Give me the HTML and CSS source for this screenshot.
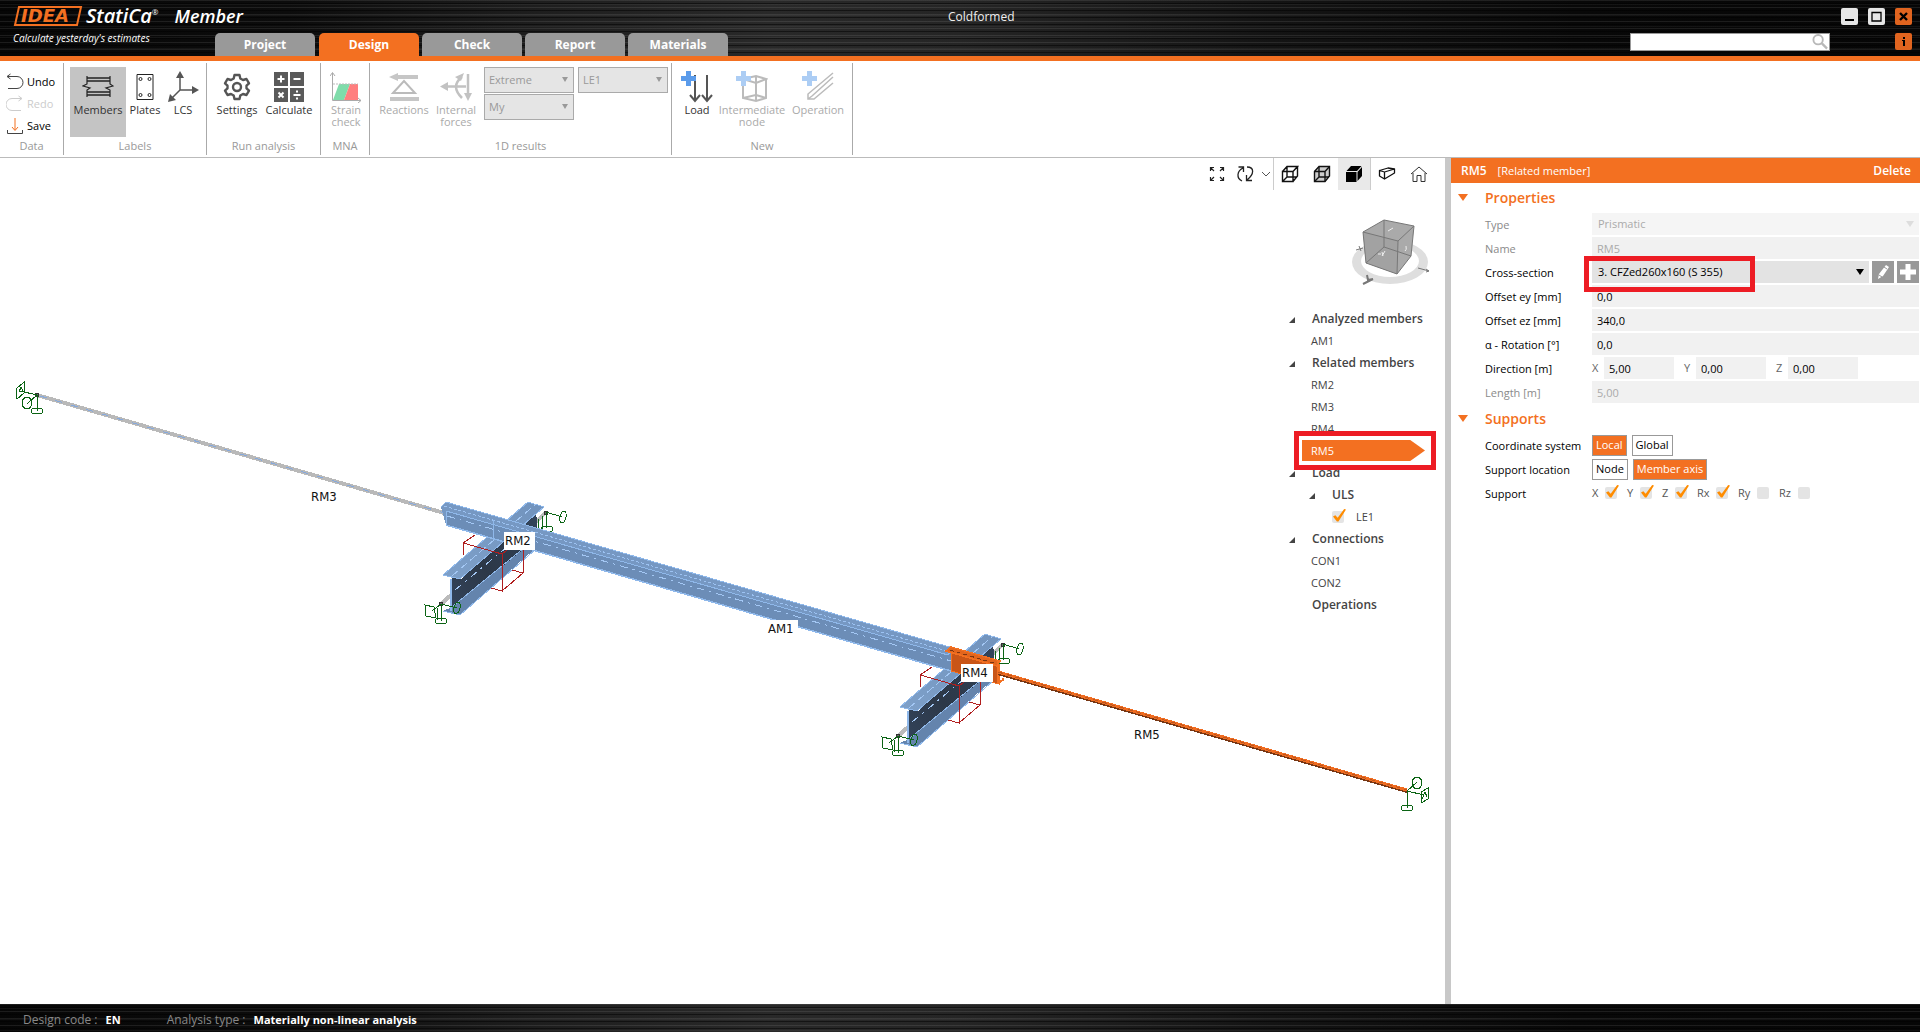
FILE: index.html
```html
<!DOCTYPE html>
<html lang="en">
<head>
<meta charset="utf-8">
<title>Coldformed - IDEA StatiCa Member</title>
<link rel="stylesheet" href="styles.css">
</head>
<body>
<header class="header">
  <div class="brand">
    <div class="brand-row">
      <svg class="logo" width="70" height="20" viewBox="0 0 70 20" role="img" aria-label="IDEA">
        <path d="M6 1H68L64 19H2Z" fill="none" stroke="#f37021" stroke-width="2"/>
        <text class="logo-text" x="8" y="16">IDEA</text>
      </svg>
      <span class="brand-name">StatiCa<sup class="reg">®</sup></span>
      <span class="product">Member</span>
    </div>
    <div class="tagline">Calculate yesterday's estimates</div>
  </div>
  <nav class="tabs">
    <button class="tab">Project</button>
    <button class="tab active">Design</button>
    <button class="tab">Check</button>
    <button class="tab">Report</button>
    <button class="tab">Materials</button>
  </nav>
  <div class="doc-title">Coldformed</div>
  <div class="header-right">
    <div class="win-buttons">
      <button class="win" aria-label="Minimize"><svg width="17" height="17"><path d="M4 12H13" stroke="#000" stroke-width="2"/></svg></button>
      <button class="win" aria-label="Maximize"><svg width="17" height="17"><path d="M4 4.5H13V13H4Z" fill="none" stroke="#000" stroke-width="1.3"/></svg></button>
      <button class="win orange" aria-label="Close"><svg width="17" height="17"><path d="M5 5L12 12M12 5L5 12" stroke="#000" stroke-width="2.4"/></svg></button>
    </div>
    <div class="search-row">
      <label class="search">
        <input type="search" aria-label="Search">
        <svg width="18" height="16" viewBox="0 0 18 17"><circle cx="7" cy="6" r="5" fill="none" stroke="#b8b8b8" stroke-width="2"/><path d="M11 10L16.500 15.500" stroke="#b8b8b8" stroke-width="2.500"/></svg>
      </label>
      <button class="win orange" aria-label="Info"><svg width="17" height="17"><path d="M8 4H10V6H8ZM7 7H10V13H8V8H7Z" fill="#000"/></svg></button>
    </div>
  </div>
</header>

<section class="ribbon">
  <div class="group g-data">
    <div class="stack">
      <button class="line-btn"><svg width="18" height="18" viewBox="0 0 18 18" fill="none" stroke="#444" stroke-width="1"><path d="M1.500 3.500H11A5.500 5.500 0 0 1 11 15.500H2M4.500 1L1 3.500L4.500 6"/></svg>Undo</button>
      <button class="line-btn off" disabled><svg width="18" height="18" viewBox="0 0 18 18" fill="none" stroke="#ccc" stroke-width="1"><path d="M15.500 3.500H6A5.500 5.500 0 0 0 6 15.500H15M12.500 1L16 3.500L12.500 6"/></svg>Redo</button>
      <button class="line-btn"><svg width="18" height="18" viewBox="0 0 18 18" fill="none"><path d="M1.500 13V16.500H16.500V13" stroke="#444"/><path d="M9 1V13M6 10L9 13.500L12 10" stroke="#f37021"/></svg>Save</button>
    </div>
    <div class="caption">Data</div>
  </div>
  <div class="group g-labels">
    <div class="tools">
      <button class="tool sel w56"><svg width="32" height="28" viewBox="0 0 32 28" fill="none"><path d="M5 5H28M5 8H28M5 19H28M5 22H28" stroke="#222" stroke-width="1.500"/><path d="M5 3V11L1 13L8 15L5 17V24M28 3V11L31 13L24 15L28 17V24" stroke="#222" stroke-width="1.200"/></svg><span>Members</span></button>
      <button class="tool w38"><svg width="20" height="28" viewBox="0 0 20 28" fill="none" stroke="#222"><path d="M2 1.500H18V26.500H2Z"/><circle cx="5.500" cy="6" r="1.500"/><circle cx="14.500" cy="6" r="1.500"/><circle cx="5.500" cy="22" r="1.500"/><circle cx="14.500" cy="22" r="1.500"/></svg><span>Plates</span></button>
      <button class="tool w38"><svg width="32" height="32" viewBox="0 0 32 32"><path d="M13 5V19H27M13 19L4 28" fill="none" stroke="#555" stroke-width="1.500"/><path d="M9 7L13 0L17 7ZM25 15L32 19L25 23ZM1 31L3 23L9 29Z" fill="#555"/></svg><span>LCS</span></button>
    </div>
    <div class="caption">Labels</div>
  </div>
  <div class="group g-run">
    <div class="tools">
      <button class="tool w48"><svg width="28" height="28" viewBox="0 0 28 28" fill="none" stroke="#555" stroke-width="2.400" stroke-linejoin="round"><path d="M11.500 2H16.500L17.300 5.500L20 7L23.500 6L26 10.300L23.500 12.700V15.300L26 17.700L23.500 22L20 21L17.300 22.500L16.500 26H11.500L10.700 22.500L8 21L4.500 22L2 17.700L4.500 15.300V12.700L2 10.300L4.500 6L8 7L10.700 5.500Z"/><circle cx="14" cy="14" r="4"/></svg><span>Settings</span></button>
      <button class="tool w56"><svg width="30" height="30" viewBox="0 0 30 30"><path d="M0 0H14V14H0ZM16 0H30V14H16ZM0 16H14V30H0ZM16 16H30V30H16Z" fill="#5a5a5a"/><path d="M7 3.500V10.500M3.500 7H10.500M19.500 7H26.500M4.500 20.500L9.500 25.500M9.500 20.500L4.500 25.500M19.500 23H26.500M23 18.500V20.500M23 25.500V27.500" stroke="#fff" stroke-width="2"/></svg><span>Calculate</span></button>
    </div>
    <div class="caption">Run analysis</div>
  </div>
  <div class="group g-mna">
    <div class="tools">
      <button class="tool off w44" disabled><svg width="32" height="32" viewBox="0 0 32 32"><path d="M3 29L9 13H20L14 29Z" fill="#7fdcaa"/><path d="M14 29L20 13H28V29Z" fill="#ff7f7f"/><path d="M2.500 2V29.500H31M0 5L2.500 1.500L5 5M28 27L31 29.500L28 32" fill="none" stroke="#aaa"/><path d="M3 13H28" stroke="#bbb" stroke-dasharray="2 1"/></svg><span>Strain<br>check</span></button>
    </div>
    <div class="caption">MNA</div>
  </div>
  <div class="group g-results">
    <div class="tools">
      <button class="tool off w56" disabled><svg width="30" height="30" viewBox="0 0 30 30"><path d="M0 5L9 1V3H29V7H9V9Z" fill="#c6c6c6"/><path d="M4 21L15 9L26 21Z" fill="none" stroke="#bbb" stroke-width="2"/><path d="M1 25H30V29H1Z" fill="#c6c6c6"/></svg><span>Reactions</span></button>
      <button class="tool off w48" disabled><svg width="32" height="30" viewBox="0 0 32 30" fill="none" stroke="#c2c2c2" stroke-width="2.500"><path d="M6 14.500H26M28 2V22M22 5Q10 14 22 26"/><path d="M0 14.500L8 10V19ZM24 21H32L28 29ZM15 5L24 1L21 9Z" fill="#c2c2c2" stroke="none"/></svg><span>Internal<br>forces</span></button>
      <div class="combos">
        <span class="combo"><select disabled aria-label="Result position"><option>Extreme</option></select></span>
        <span class="combo"><select disabled aria-label="Internal force"><option>My</option></select></span>
      </div>
      <div class="combos">
        <span class="combo"><select disabled aria-label="Load case"><option>LE1</option></select></span>
      </div>
    </div>
    <div class="caption">1D results</div>
  </div>
  <div class="group g-new">
    <div class="tools">
      <button class="tool w34"><svg width="32" height="32" viewBox="0 0 32 32"><path d="M14 4V29M26 4V29M9 24L14 30L19 24M21 24L26 30L31 24" fill="none" stroke="#555" stroke-width="2"/><path d="M5 0H10V5H15V10H10V15H5V10H0V5H5Z" fill="#5b9bea"/></svg><span>Load</span></button>
      <button class="tool off w76" disabled><svg width="32" height="32" viewBox="0 0 32 32"><path d="M7 8L20 12L30 8L20 5ZM7 8V27L20 30L30 27V8M20 12V30M20 5V24L7 27M20 24L30 27" fill="none" stroke="#bbb" stroke-width="2"/><path d="M5 0H10V5H15V10H10V15H5V10H0V5H5Z" fill="#accdf4"/></svg><span>Intermediate<br>node</span></button>
      <button class="tool off w56" disabled><svg width="32" height="32" viewBox="0 0 32 32"><path d="M31 2L6 23V28H12L31 12M31 6L10 25M6 28L10 25" fill="none" stroke="#bbb" stroke-width="1.500"/><path d="M5 0H10V5H15V10H10V15H5V10H0V5H5Z" fill="#accdf4"/></svg><span>Operation</span></button>
    </div>
    <div class="caption">New</div>
  </div>
</section>

<main class="main">
  <section class="viewport">
    <svg class="scene" viewBox="0 158 1445 845" role="img" aria-label="Member model">
      <defs>
        <linearGradient id="web" x1="0" y1="1" x2="1" y2="0"><stop offset="0" stop-color="#33435a"/><stop offset=".4" stop-color="#2c3848"/><stop offset=".7" stop-color="#2e3d50"/><stop offset="1" stop-color="#34465c"/></linearGradient>
        <linearGradient id="flange" x1="0" y1="1" x2="1" y2="0"><stop offset="0" stop-color="#7ea0c9"/><stop offset="1" stop-color="#7193bd"/></linearGradient>
        <g id="column">
          <!-- end supports and stubs -->
          <path d="M536 522L546 512" stroke="#bbb" stroke-width="4"/>
          <path d="M441 604L451 595" stroke="#bbb" stroke-width="4"/>
          <path d="M544 511H547V514H544ZM439 602H442V605H439Z" class="node"/>
          <g class="green">
            <path d="M546 512L562 517M546 512V528M542 516V530M538 519V530"/>
            <ellipse cx="563" cy="517" rx="3" ry="6" transform="rotate(12 563 517)"/>
            <ellipse cx="547" cy="529" rx="6" ry="3"/>
          </g>
          <path d="M452 578L461 579L536 510L537 524V546L459 610L452 607Z" fill="url(#web)"/>
          <path d="M443 611L452 607L525 548L538 546L460 615Z" fill="#6484ad"/>
          <path d="M450 579H452V611H450Z" fill="#8fb8ea"/>
          <path d="M443 575L460 579L544 507L528 502Z" fill="url(#flange)" stroke="#8fb8ea"/>
          <path d="M452 576L536 504" class="axis"/>
          <path d="M455 590L530 528" class="dashdot"/>
          <path d="M453 606L530 543M443 611L460 615L536 549" fill="none" stroke="#8fb8ea"/>
          <path d="M463 543L475 535M463 555V543L502 554V591L491 588M502 554L523 538V573L502 591M523 573L512 570" class="zone"/>
          <g class="green">
            <path d="M441 604L457 608M441 604V621M437 608V620M425 605L434 607L436 618L426 616ZM432 611L441 604"/>
            <ellipse cx="457" cy="608" rx="3" ry="6" transform="rotate(15 457 608)"/>
            <ellipse cx="441" cy="621" rx="6" ry="3"/>
          </g>
        </g>
      </defs>

      <path d="M37 395L446 513.500" stroke="#b9b9b9" stroke-width="4"/>
      <path d="M40 396L446 513.500" stroke="#86a9dc" stroke-width="1" stroke-dasharray="7 9"/>
      <path d="M35 393H38V396H35Z" class="node"/>
      <g class="green">
        <path d="M16 389L24 382V393L17 399ZM19 392L21 387L23 391M20 391L37 395L27 404M37 395V411"/>
        <ellipse cx="27" cy="403" rx="5" ry="6"/><ellipse cx="37" cy="411" rx="6" ry="3"/>
      </g>

      <use href="#column"/>
      <use href="#column" x="457" y="132"/>

      <!-- analyzed member -->
      <path d="M446 505L951 650V671L446 525Z" fill="#6c8db7"/>
      <path d="M446 525L951 671" stroke="#8fb8ea" stroke-width="1.500"/>
      <path d="M441 507L446 502L953 648L948 655L446 511V525" fill="#7698c3" stroke="#8fb8ea"/>
      <path d="M444 506L950 652" stroke="#9cc2f2" stroke-dasharray="3 2"/>
      <path d="M447 516L951 661" class="dashdot"/>
      <path d="M493 520V538" stroke="#8fb8ea"/>

      <!-- selected member -->
      <path d="M951 652L999 664V684L951 671Z" fill="#c95517" stroke="#f37021"/>
      <path d="M946 651L951 647L1000 661L997 666Z" fill="#e2651d" stroke="#f37021" stroke-width="1.500"/>
      <path d="M950 650L997 664" stroke="#7c3510" stroke-dasharray="4 3"/>
      <path d="M998 661V683L1003 680V678" fill="none" stroke="#f37021" stroke-width="2"/>
      <path d="M998 673L1407 791" stroke="#773613" stroke-width="4"/>
      <path d="M998 672L1407 790" stroke="#f06c20" stroke-width="3"/>
      <path d="M998 672L1407 790" stroke="#bd551d" stroke-dasharray="5 4"/>
      <g class="green">
        <path d="M1407 791L1417 782M1407 791L1424 795M1407 791V808M1421 792L1428 788V799L1421 803ZM1422 799L1425 792L1427 797"/>
        <ellipse cx="1417" cy="783" rx="5" ry="6"/><ellipse cx="1407" cy="808" rx="6" ry="3"/>
      </g>

      <path d="M504 532H535V550H504ZM961 664H993V682H961ZM767 620H798V637H767Z" fill="#fff"/>
      <text x="311" y="501">RM3</text>
      <text x="505" y="545">RM2</text>
      <text x="768" y="633">AM1</text>
      <text x="962" y="677">RM4</text>
      <text x="1134" y="739">RM5</text>
    </svg>

    <div class="overlay">
      <div class="view-tools">
        <button class="vt w28" aria-label="Zoom all"><svg width="16" height="16" viewBox="0 0 16 16" fill="none" stroke="#222" stroke-width="1.200"><path d="M1.500 5V1.500H5M1.500 1.500L5 5M11 1.500H14.500V5M14.500 1.500L11 5M1.500 11V14.500H5M1.500 14.500L5 11M11 14.500H14.500V11M14.500 14.500L11 11"/></svg></button>
        <button class="vt w28" aria-label="Rotate"><svg width="18" height="18" viewBox="0 0 18 18" fill="none" stroke="#222" stroke-width="1.300"><path d="M6 16C0 13 1 6 7 3M2.500 2H7.500V7M11 2C18.500 2 18.500 9 11 15M16 15.500H10.500V10"/></svg></button>
        <button class="vt w16" aria-label="Rotation options"><svg width="8" height="6" fill="none" stroke="#555"><path d="M0 1L4 5L8 1"/></svg></button>
        <button class="vt rule" aria-label="Wireframe"><svg width="18" height="18" viewBox="0 0 18 18" fill="none" stroke="#111" stroke-width="1.400"><path d="M1.500 6.500H12V16.500H1.500ZM1.500 6.500L6 1.500H16.500L12 6.500M16.500 1.500V11L12 16.500M6 2V12H16M6 12L2 16"/></svg></button>
        <button class="vt" aria-label="Transparent"><svg width="18" height="18" viewBox="0 0 18 18" fill="#ccc" stroke="#111" stroke-width="1.400"><path d="M1.500 6.500L6 1.500H16.500V11L12 16.500H1.500Z"/><path d="M1.500 6.500H12V16.500M12 6.500L16.500 1.500M6 2V12H16M6 12L2 16" fill="none"/></svg></button>
        <button class="vt on" aria-label="Solid"><svg width="18" height="18" viewBox="0 0 18 18"><path d="M1 7H11.500V17H1ZM1.500 6L6 1H16.500L12 6ZM12.500 7L17 2V11L12.500 16Z" fill="#000"/></svg></button>
        <button class="vt rule" aria-label="Perspective"><svg width="18" height="16" viewBox="0 0 18 16" fill="none" stroke="#111" stroke-width="1.300" stroke-linejoin="round"><path d="M1.500 4.500L6.500 6V13L1.500 10ZM1.500 4.500L10 2L16.500 3L6.500 6M16.500 3V7L6.500 13"/></svg></button>
        <button class="vt" aria-label="Default view"><svg width="18" height="18" viewBox="0 0 18 18" fill="none" stroke="#333"><path d="M1 9L9 2L17 9M3 8V16.500H7V10.500H11V16.500H15V8"/></svg></button>
      </div>
      <svg class="nav-cube" width="80" height="70" viewBox="0 0 80 70">
        <path fill-rule="evenodd" d="M1 43a38 22 0 1 0 76 0a38 22 0 1 0 -76 0ZM10 42a29 16 0 1 0 58 0a29 16 0 1 0 -58 0Z" fill="#dedede"/>
        <path d="M12 13L33 1L63 7L60 37L46 55L15 44Z" fill="#aaaaaa"/>
        <path d="M12 13L47 22L46 55L15 44Z" fill="#a2a2a2"/>
        <path d="M12 13L33 1L63 7L60 37L46 55L15 44ZM12 13L47 22L63 7M47 22L46 55M33 1V28L15 44M33 28L60 37" fill="none" stroke="#777"/>
        <path d="M37 12L42 9M27 35H30M31 33L32 37M34 32L31 37M54 32Q56 31 55 27" stroke="#eee" fill="none"/>
        <path d="M12 65L22 60M16 56L17 61L22 60" stroke="#777" stroke-width="2" fill="none"/>
        <path d="M5 31L12 29M8 27L10 32M67 49L78 52M75 50L78 52L75 53" stroke="#777" fill="none"/>
      </svg>
      <ul class="tree">
        <li class="node-h caret">Analyzed members</li>
        <li>AM1</li>
        <li class="node-h caret">Related members</li>
        <li>RM2</li>
        <li>RM3</li>
        <li>RM4</li>
        <li class="picked"><span>RM5</span><i class="mark"></i></li>
        <li class="node-h caret">Load</li>
        <li class="node-h caret sub">ULS</li>
        <li class="leaf"><label><input type="checkbox" class="tick" checked>LE1</label></li>
        <li class="node-h caret">Connections</li>
        <li>CON1</li>
        <li>CON2</li>
        <li class="node-h">Operations</li>
      </ul>
    </div>
  </section>

  <aside class="panel">
    <div class="panel-head"><b>RM5</b><span>[Related member]</span><button class="delete">Delete</button></div>
    <h2 class="section">Properties</h2>
    <div class="form">
      <div class="row dim"><label for="type">Type</label><span class="pick faint"><select id="type" disabled><option>Prismatic</option></select></span></div>
      <div class="row dim"><label for="name">Name</label><input id="name" value="RM5" disabled></div>
      <div class="row"><label for="cs">Cross-section</label><span class="pick marked"><select id="cs"><option>3. CFZed260x160 (S 355)</option></select><i class="mark"></i></span>
        <button class="mini" aria-label="Edit cross-section"><svg width="22" height="22"><path d="M6 18L7 13L14 4L17 6L11 15ZM8 14L10 16" fill="#fff"/><path d="M12 6L15 8M7 14L10 16" stroke="#999"/></svg></button>
        <button class="mini" aria-label="Add cross-section"><svg width="22" height="22"><path d="M11 3V19M3 11H19" stroke="#fff" stroke-width="5"/></svg></button></div>
      <div class="row"><label for="ey">Offset ey [mm]</label><input id="ey" value="0,0"></div>
      <div class="row"><label for="ez">Offset ez [mm]</label><input id="ez" value="340,0"></div>
      <div class="row"><label for="rot">α - Rotation [°]</label><input id="rot" value="0,0"></div>
      <div class="row"><span class="lab">Direction [m]</span>
        <label class="axis-in">X<input value="5,00"></label><label class="axis-in">Y<input value="0,00"></label><label class="axis-in">Z<input value="0,00"></label></div>
      <div class="row dim"><label for="len">Length [m]</label><input id="len" value="5,00" disabled></div>
    </div>
    <h2 class="section">Supports</h2>
    <div class="form">
      <div class="row"><span class="lab">Coordinate system</span><div class="choices"><button class="choice on">Local</button><button class="choice">Global</button></div></div>
      <div class="row"><span class="lab">Support location</span><div class="choices"><button class="choice">Node</button><button class="choice on">Member axis</button></div></div>
      <div class="row"><span class="lab">Support</span><div class="dofs">
        <label>X<input type="checkbox" class="tick" checked></label>
        <label>Y<input type="checkbox" class="tick" checked></label>
        <label>Z<input type="checkbox" class="tick" checked></label>
        <label class="wide">Rx<input type="checkbox" class="tick" checked></label>
        <label class="wide">Ry<input type="checkbox" class="tick"></label>
        <label class="wide">Rz<input type="checkbox" class="tick"></label>
      </div></div>
    </div>
  </aside>
</main>

<footer class="status">
  <span>Design code :</span><b>EN</b>
  <span class="second">Analysis type :</span><b>Materially non-linear analysis</b>
</footer>
</body>
</html>
```

FILE: styles.css
```css
* { box-sizing: border-box; }
:root { --orange: #f37021; --red: #ed1c24; }
body {
  margin: 0;
  min-height: 100vh;
  display: flex;
  flex-direction: column;
  font: 11px/14px "Open Sans", "Noto Sans", sans-serif;
  color: #444;
  background: #fff;
}
button, input, select { font: inherit; color: inherit; margin: 0; padding: 0; border: 0; background: none; border-radius: 0; }
svg { display: block; flex: none; }
ul, h2 { margin: 0; padding: 0; }
ul { list-style: none; }

/* header */
.header, .status {
  background:
    repeating-linear-gradient(180deg, rgba(255,255,255,.09) 0 1px, transparent 1px 3px, rgba(0,0,0,.5) 3px 4px, transparent 4px 7px),
    repeating-linear-gradient(180deg, transparent 0 4px, rgba(255,255,255,.05) 4px 5px, transparent 5px 11px),
    linear-gradient(90deg, #060606 0, #0c0c0c 15%, #1e1e1e 28%, #292929 40%, #252525 50%, #151515 65%, #080808 82%, #060606 100%);
}
.header {
  display: grid;
  grid-template-columns: 215px 515px 1fr 320px;
  height: 61px;
  border-bottom: 5px solid var(--orange);
}
.brand { padding: 6px 0 0 13px; color: #fff; font-style: italic; }
.brand-row { display: flex; align-items: center; height: 20px; white-space: nowrap; }
.logo { overflow: visible; }
.logo-text { font: italic 700 18px "DejaVu Sans", sans-serif; fill: var(--orange); }
.brand-name { margin-left: 3px; font-size: 20px; font-weight: 600; line-height: 20px; }
.reg { font-size: 8px; line-height: 8px; vertical-align: 8px; font-weight: 400; }
.product { margin-left: 16px; font-size: 18px; font-weight: 600; }
.tagline { margin-top: 5px; font-size: 10px; line-height: 14px; }
.tabs { display: flex; gap: 3px; align-items: flex-end; }
.tab { width: 100px; height: 23px; border-radius: 5px 5px 0 0; background: #999; color: #fff; font-weight: 700; font-size: 12px; padding-top: 1px; }
.tab.active { background: var(--orange); margin-left: 1px; }
.doc-title { grid-column: 3; color: #eee; font-size: 12px; padding: 10px 0 0 218px; }
.header-right { padding: 8px 8px 0 0; display: flex; flex-direction: column; align-items: flex-end; gap: 8px; }
.win-buttons { display: flex; gap: 10px; }
.win { width: 17px; height: 17px; border-radius: 2px; background: #e6e6e6; }
.win.orange { background: #e0641f; }
.search-row { display: flex; gap: 65px; }
.search { display: flex; width: 200px; height: 18px; background: #fff; border: 1px solid #999; }
.search input { flex: 1; min-width: 0; outline: 0; }

/* ribbon */
.ribbon { display: flex; height: 97px; padding-top: 2px; border-bottom: 1px solid #bbb; flex: none; }
.group { height: 92px; border-right: 1px solid #aaa; display: flex; flex-direction: column; justify-content: space-between; }
.g-data { width: 64px; }
.g-labels { width: 143px; }
.g-run { width: 114px; }
.g-mna { width: 49px; }
.g-results { width: 302px; }
.g-new { width: 181px; }
.caption { text-align: center; color: #999; padding-bottom: 2px; }
.stack { padding: 8px 0 0 6px; }
.line-btn { display: flex; align-items: center; gap: 3px; height: 22px; color: #000; }
.line-btn.off { color: #ccc; }
.tools { display: flex; padding: 4px 0 0 6px; }
.g-mna .tools { padding-left: 3px; }
.g-new .tools { padding-left: 8px; }
.tool { height: 70px; display: flex; flex-direction: column; align-items: center; color: #333; line-height: 12px; white-space: nowrap; }
.tool svg { height: 32px; margin: 4px 0 1px; }
.tool.sel { background: #c4c4c4; }
.tool.off { color: #aaa; }
.w28 { width: 28px; }
.w34 { width: 34px; }
.w38 { width: 38px; }
.w44 { width: 44px; }
.w48 { width: 48px; }
.w56 { width: 56px; }
.w76 { width: 76px; }
.combos { display: flex; flex-direction: column; gap: 1px; margin-left: 4px; }
.combo { position: relative; width: 90px; height: 26px; border: 1px solid #aaa; background: #e5e5e5; color: #999; }
.combo select, .pick select { appearance: none; width: 100%; height: 100%; outline: 0; opacity: 1; }
.combo select { padding-left: 4px; }
.combo::after, .pick::after {
  content: ""; position: absolute; right: 5px; top: 9px;
  border: 3px solid transparent; border-top: 5px solid #999; border-bottom: 0;
}

/* workspace */
.main { flex: 1; display: grid; grid-template-columns: minmax(0, 1fr) 475px; }
.viewport { display: grid; overflow: hidden; }
.scene { grid-area: 1 / 1; width: 100%; height: auto; shape-rendering: crispEdges; }
.scene text { font: 13px "DejaVu Sans Condensed", "DejaVu Sans", sans-serif; fill: #111; }
.green { fill: none; stroke: #0b6414; stroke-width: 1; }
.node { fill: #666; stroke: #333; }
.zone { fill: none; stroke: #b01e1e; stroke-width: 1; }
.axis { stroke: #a4c8f5; stroke-dasharray: 8 4; }
.dashdot { stroke: #a4c8f5; stroke-dasharray: 8 5 2 5; }
.overlay { grid-area: 1 / 1; justify-self: end; width: 250px; padding-right: 10px; display: flex; flex-direction: column; align-items: flex-end; }
.view-tools { display: flex; height: 32px; }
.vt { width: 32px; height: 32px; display: flex; align-items: center; justify-content: center; }
.vt.rule { width: 33px; border-left: 1px solid #ccc; }
.vt.on { background: #e9e9e9; }
.vt.w28 { width: 28px; }
.vt.w16 { width: 14px; }
.nav-cube { margin: 29px 4px 19px 0; }
.tree { width: 146px; }
.tree li { height: 22px; line-height: 22px; padding-left: 22px; position: relative; }
.tree .node-h { font-weight: 600; font-size: 12px; padding-left: 23px; }
.tree .sub { margin-left: 20px; }
.caret::before {
  content: ""; position: absolute; left: 0; top: 9px; width: 6px; height: 6px;
  background: #444; clip-path: polygon(100% 0, 100% 100%, 0 100%);
}
.tree .leaf { padding-left: 43px; }
.leaf label { display: flex; align-items: center; gap: 12px; }
.tree .picked { padding-left: 13px; z-index: 1; }
.picked span { display: block; width: 123px; height: 21px; line-height: 21px; padding-left: 9px; color: #fff; background: var(--orange); clip-path: polygon(0 0, 88% 0, 100% 50%, 88% 100%, 0 100%); }
.mark { position: absolute; border: 5px solid var(--red); pointer-events: none; }
.picked .mark { left: 5px; top: -9px; width: 142px; height: 39px; }

.tick { appearance: none; width: 12px; height: 12px; flex: none; border-radius: 2px; background: #e4e4e4; position: relative; }
.tick:checked::after {
  content: ""; position: absolute; left: 1px; top: -2px; width: 13px; height: 13px; background: #ff8c00;
  clip-path: polygon(0 58%, 18% 48%, 36% 68%, 86% 0, 100% 4%, 42% 96%, 30% 96%);
}

/* properties panel */
.panel { border-left: 6px solid #c8c8c8; color: #000; }
.panel-head { display: flex; align-items: center; gap: 11px; height: 25px; padding: 0 9px 0 10px; background: var(--orange); color: #fff; }
.panel-head b { font-size: 12px; font-weight: 600; }
.delete { margin-left: auto; font-weight: 600; font-size: 12px; }
.section { position: relative; height: 30px; line-height: 30px; padding-left: 34px; font-size: 14px; font-weight: 600; color: var(--orange); }
.section::before { content: ""; position: absolute; left: 7px; top: 11px; border: 5px solid transparent; border-top: 7px solid var(--orange); border-bottom: 0; }
.form { display: grid; gap: 2px; padding: 0 1px 1px 34px; }
.row { display: flex; height: 22px; align-items: center; gap: 3px; }
.row > label:first-child, .lab { width: 104px; flex: none; padding-top: 1px; }
.row > input { flex: 1; min-width: 0; height: 22px; padding: 0 5px; background: #f1f1f1; outline: 0; }
.dim { color: #8a8a8a; }
.dim input, .dim select { color: #aaa; }
.pick { position: relative; flex: 1; height: 22px; background: #e3e3e3; }
.pick select { padding-left: 6px; }
.pick::after { top: 8px; border: 4px solid transparent; border-top: 6px solid #000; border-bottom: 0; }
.pick.faint { background: #f5f5f5; }
.pick.faint::after { border-top-color: #ddd; }
.marked .mark { left: -8px; top: -5px; width: 171px; height: 36px; z-index: 1; }
.mini { width: 22px; height: 22px; background: #999; }
.axis-in { display: flex; align-items: center; justify-content: space-between; width: 82px; margin-right: 7px; color: #666; }
.axis-in input { width: 70px; height: 22px; padding-left: 5px; background: #f1f1f1; color: #000; outline: 0; }
.choices { display: flex; gap: 5px; }
.choice { height: 21px; padding: 0 3px; border: 1px solid #999; background: #fff; }
.choice.on { background: var(--orange); color: #fff; }
.dofs { display: flex; color: #555; }
.dofs label { display: flex; align-items: center; justify-content: space-between; width: 25px; margin-right: 10px; }
.dofs .wide { width: 31px; }

/* status bar */
.status { display: flex; align-items: center; gap: 8px; height: 28px; padding: 3px 0 0 23px; color: #888; font-size: 12px; flex: none; }
.status b { color: #fff; font-size: 11px; }
.second { margin-left: 38px; }
```
